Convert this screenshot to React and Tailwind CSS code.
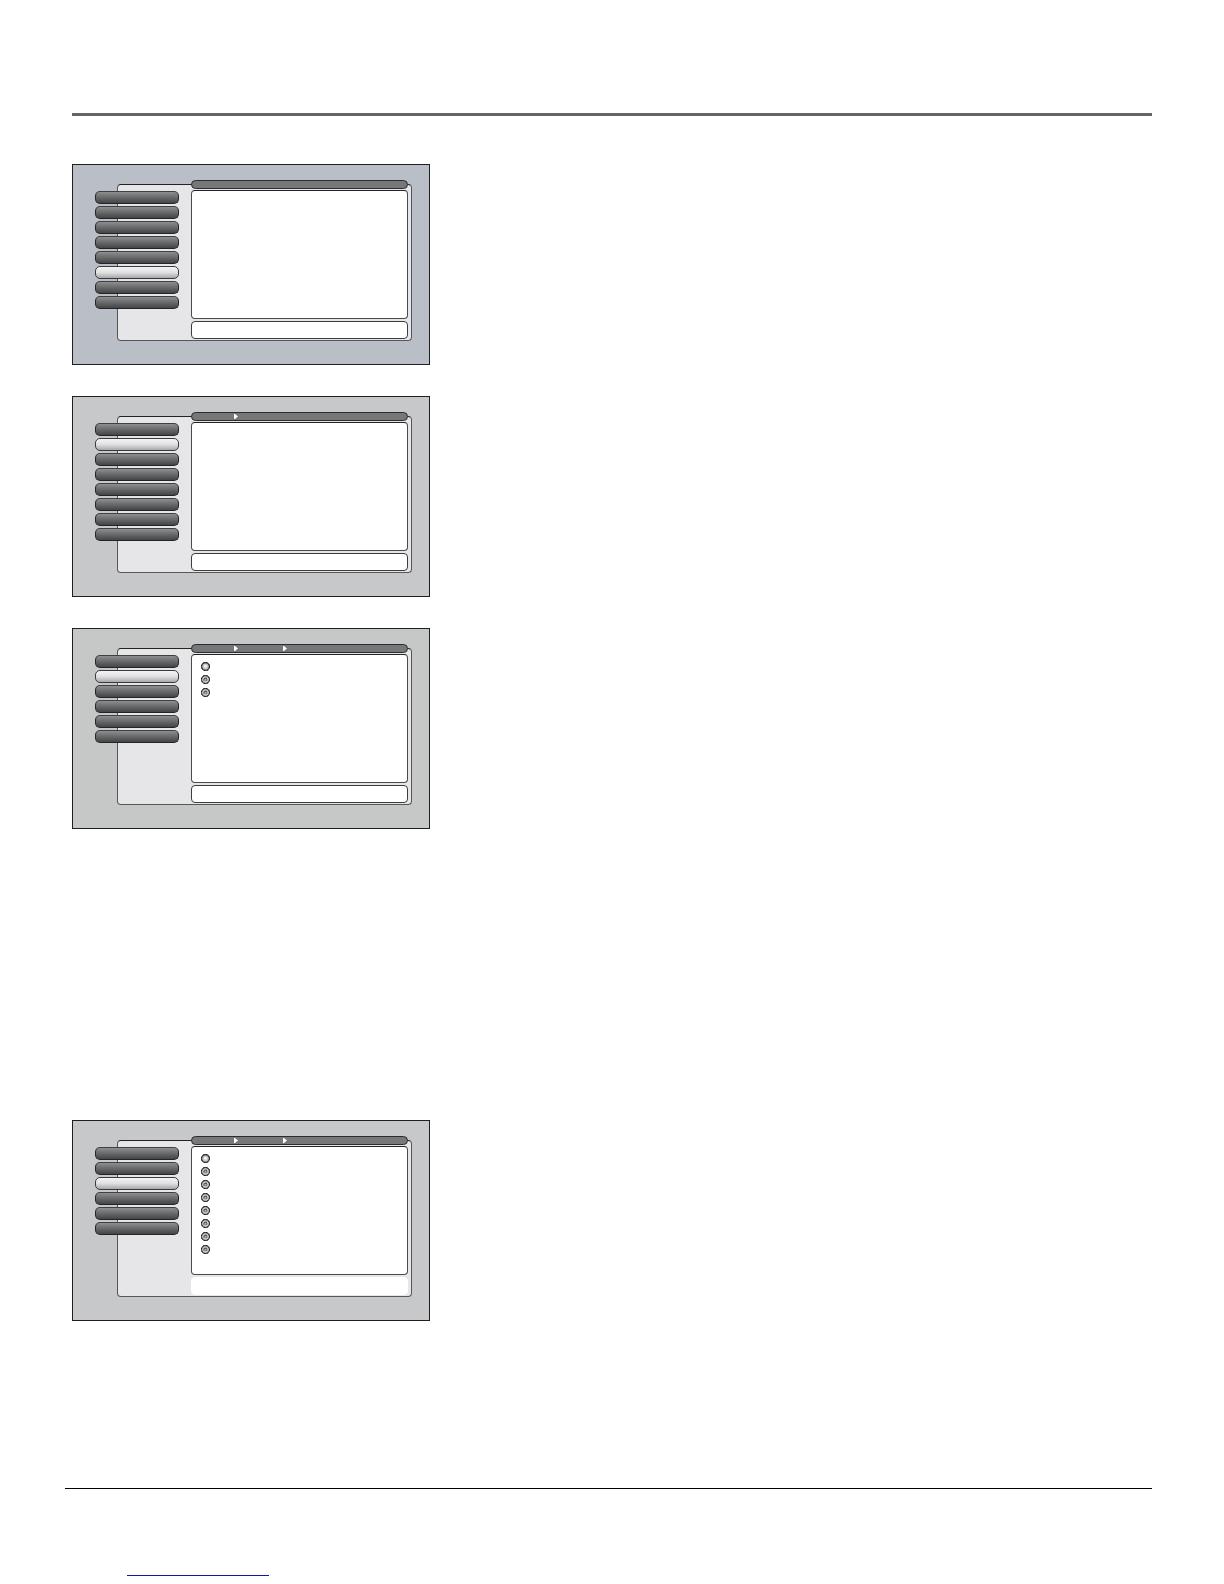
import React, { useState } from 'react';
import clsx from 'clsx';

// Menu screens shown down the left side of the page
const upperScreens = [
  { id: 'main', tint: 'bg-[#babfc7]', tabs: 8, active: 5, crumbs: 0, options: 0, framedHelp: true },
  { id: 'sub', tint: 'bg-[#c7c8c9]', tabs: 8, active: 1, crumbs: 1, options: 0, framedHelp: true },
  { id: 'choice', tint: 'bg-[#c6c8c8]', tabs: 6, active: 1, crumbs: 2, options: 3, framedHelp: true },
];

const lowerScreen = { id: 'list', tint: 'bg-[#c7c8c9]', tabs: 6, active: 2, crumbs: 2, options: 8, framedHelp: false };

const range = (n) => Array.from({ length: n }, (_, i) => i);

function Tab({ active, onClick, label }) {
  return (
    <button
      type="button"
      aria-label={label}
      onClick={onClick}
      className={clsx(
        'h-[13px] w-full rounded-[5px] border bg-linear-to-b',
        active
          ? 'border-[#3a3a3c] from-[#f4f4f5] via-[#e0e0e2] to-[#a8a8ab]'
          : 'border-[#242426] border-t-[#404042] from-[#8e8f91] via-[#68696b] to-[#444547]'
      )}
    />
  );
}

function Crumb() {
  return (
    <svg className="h-[5px] w-1" viewBox="0 0 4 5" aria-hidden="true">
      <path d="M0 0H1L4 2.5L1 5H0Z" fill="#fff" />
    </svg>
  );
}

// Small knurled knob, the selected one has a light centre
function Knob({ checked }) {
  return (
    <svg className="block size-[9px]" viewBox="0 0 9 9" aria-hidden="true">
      <circle cx="4.5" cy="4.5" r="3.9" fill="#b4b4b4" stroke="#3c3c3c" strokeWidth="1.1" />
      <circle cx="4.5" cy="4.5" r="4" fill="none" stroke="#161616" strokeWidth="1" strokeDasharray="1.6 1.54" />
      {checked ? (
        <>
          <circle cx="4.5" cy="4.5" r="2.4" fill="#cfcfcf" />
          <circle cx="4.4" cy="4.2" r="1.3" fill="#fafafa" />
        </>
      ) : (
        <>
          <circle cx="4.5" cy="4.5" r="2.8" fill="none" stroke="#dadada" strokeWidth="0.7" />
          <path d="M3 5.6V4.3Q3 3.3 4.2 3.3H6" fill="none" stroke="#3e3e3e" strokeWidth="1" />
          <path d="M4.6 5.4H5.8V4.2" fill="none" stroke="#5c5c5c" strokeWidth="0.9" />
        </>
      )}
    </svg>
  );
}

function Screen({ screen }) {
  const [active, setActive] = useState(screen.active);
  const [option, setOption] = useState(0);

  return (
    <section className={clsx('w-full max-w-[358px] border border-[#1f1f21] pt-[19px] pr-[17px] pb-[23px] pl-11', screen.tint)}>
      <div className="flex gap-3 rounded-[4px] border border-[#55565a] border-t-[#222] bg-[#e6e6e9] pr-[3px] pb-px">
        {/* Tabs hang over the left edge of the panel */}
        <nav className="mt-1.5 -ml-[23px] flex w-[84px] shrink-0 flex-col gap-0.5">
          {range(screen.tabs).map((i) => (
            <Tab key={i} label={`Menu ${i + 1}`} active={i === active} onClick={() => setActive(i)} />
          ))}
        </nav>

        <div className="-mt-[5px] flex flex-1 flex-col">
          <div className="flex h-[9px] items-center gap-[45px] rounded-full border border-[#2c2c2e] bg-[#767778] pl-[42px]">
            {range(screen.crumbs).map((i) => <Crumb key={i} />)}
          </div>

          <div className="mt-px mb-0.5 flex min-h-[129px] flex-col gap-1 rounded-[4px] border border-[#4a4a4c] border-t-[#222] bg-white pt-[7px] pl-[9px]">
            {range(screen.options).map((i) => (
              <label key={i} className="relative block size-[9px]">
                <input
                  type="radio"
                  name={screen.id}
                  aria-label={`Option ${i + 1}`}
                  checked={i === option}
                  onChange={() => setOption(i)}
                  className="sr-only"
                />
                <Knob checked={i === option} />
              </label>
            ))}
          </div>

          <div className={clsx('h-[18px] rounded-[4px] border bg-white', screen.framedHelp ? 'border-[#3c3c3e]' : 'border-white')} />
        </div>
      </div>
    </section>
  );
}

export default function App() {
  return (
    <div className="bg-white pt-[113px] pb-2 font-['Liberation_Sans',sans-serif]">
      <main className="px-[72px]">
        <div className="h-[3px] bg-[#666566]" />
        <div className="mt-12 flex flex-col gap-[31px]">
          {upperScreens.map((screen) => <Screen key={screen.id} screen={screen} />)}
        </div>
        <div className="mt-[291px]">
          <Screen screen={lowerScreen} />
        </div>
      </main>

      <footer className="mt-[167px] mr-[72px] ml-[65px] border-t border-black pl-[62px]">
        <a href="#" aria-label="Website" className="block h-[87px] w-[142px] border-b border-[#1414a8]" />
      </footer>
    </div>
  );
}
